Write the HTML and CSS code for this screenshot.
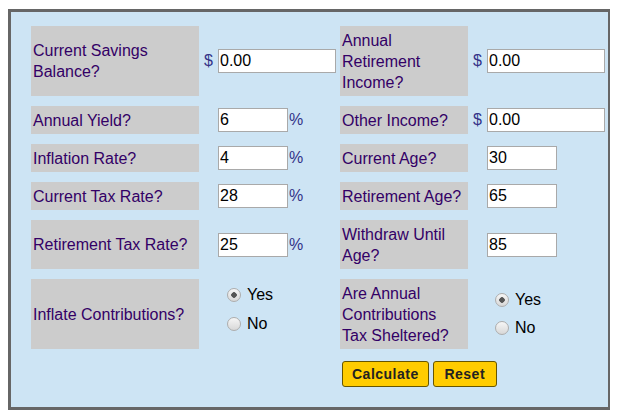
FILE: index.html
```html
<!DOCTYPE html>
<html lang="en">
<head>
  <meta charset="UTF-8" />
  <meta name="viewport" content="width=device-width, initial-scale=1.0" />
  <title>Retirement Calculator</title>
  <link rel="stylesheet" href="styles.css">
</head>
<body>
  <form class="calc" onsubmit="return false">
    <div class="grid">
      <div class="label">Current Savings Balance?</div>
      <div class="field"><span class="sym">$</span><input class="wide" type="text" value="0.00"></div>
      <div class="label">Annual Retirement Income?</div>
      <div class="field"><span class="sym">$</span><input class="wide" type="text" value="0.00"></div>

      <div class="label">Annual Yield?</div>
      <div class="field"><span class="sym"></span><input class="short" type="text" value="6"><span class="pct">%</span></div>
      <div class="label">Other Income?</div>
      <div class="field"><span class="sym">$</span><input class="wide" type="text" value="0.00"></div>

      <div class="label">Inflation Rate?</div>
      <div class="field"><span class="sym"></span><input class="short" type="text" value="4"><span class="pct">%</span></div>
      <div class="label">Current Age?</div>
      <div class="field"><span class="sym"></span><input class="short" type="text" value="30"></div>

      <div class="label">Current Tax Rate?</div>
      <div class="field"><span class="sym"></span><input class="short" type="text" value="28"><span class="pct">%</span></div>
      <div class="label">Retirement Age?</div>
      <div class="field"><span class="sym"></span><input class="short" type="text" value="65"></div>

      <div class="label">Retirement Tax Rate?</div>
      <div class="field"><span class="sym"></span><input class="short" type="text" value="25"><span class="pct">%</span></div>
      <div class="label">Withdraw Until Age?</div>
      <div class="field"><span class="sym"></span><input class="short" type="text" value="85"></div>

      <div class="label">Inflate Contributions?</div>
      <div class="choices left">
        <label><input type="radio" name="inflate" checked> Yes</label>
        <label><input type="radio" name="inflate"> No</label>
      </div>
      <div class="label">Are Annual Contributions Tax Sheltered?</div>
      <div class="choices">
        <label><input type="radio" name="shelter" checked> Yes</label>
        <label><input type="radio" name="shelter"> No</label>
      </div>

      <div></div>
      <div></div>
      <div class="buttons">
        <button type="button" class="calc-btn">Calculate</button>
        <button type="reset" class="reset-btn">Reset</button>
      </div>
    </div>
  </form>
</body>
</html>
```

FILE: styles.css
```css
body {
  margin: 8px;
  background: #fff;
  font-family: "Liberation Sans", Arial, sans-serif;
}

.calc {
  width: 575px;
  margin-top: 1px;
  padding: 14px 2px 20px 20px;
  background: #cde4f4;
  border: 3px solid #666;
}

.grid {
  display: grid;
  grid-template-columns: 168px 133px 128px 133px;
  column-gap: 4px;
  row-gap: 10px;
}

.label {
  display: flex;
  align-items: center;
  padding: 3.5px 5px 3.5px 2px;
  background: #ccc;
  color: #330066;
  font-size: 16px;
  line-height: 21px;
}

.field {
  display: flex;
  align-items: center;
  color: #333388;
  font-size: 16px;
}

.sym {
  width: 15px;
  padding-left: 1px;
  box-sizing: border-box;
}

.field input {
  height: 24px;
  box-sizing: border-box;
  margin: 0;
  padding: 1px 1px;
  border: 1px solid #a9a9a9;
  background: #fff;
  font-family: "Liberation Sans", Arial, sans-serif;
  font-size: 16px;
  color: #000;
}

.wide { width: 118px; }
.short { width: 70px; }

.pct { margin-left: 1px; }

.choices {
  display: flex;
  flex-direction: column;
  justify-content: center;
  gap: 7px;
  padding-left: 23px;
  font-size: 16px;
  color: #000;
}

.choices.left {
  padding-bottom: 9px;
  gap: 8px;
  padding-left: 24px;
}

.choices label {
  display: flex;
  align-items: center;
  gap: 6px;
  height: 21px;
}

.choices input {
  appearance: none;
  -webkit-appearance: none;
  width: 14px;
  height: 14px;
  margin: 0;
  border: 1px solid #adadad;
  border-radius: 50%;
  background: linear-gradient(#f6f6f6, #d8d8d8);
}

.choices input:checked {
  background: radial-gradient(circle, #555 0, #555 2.5px, transparent 3px), linear-gradient(#f6f6f6, #d8d8d8);
}

.buttons {
  grid-column: 3 / 5;
  display: flex;
  gap: 4px;
  padding: 2px 0 0 2px;
}

.buttons button {
  height: 26px;
  padding: 0 9px;
  background: #ffcc00;
  border: 1px solid #665500;
  border-radius: 3px;
  font-family: "Liberation Sans", Arial, sans-serif;
  font-size: 14px;
  font-weight: bold;
  letter-spacing: 0.5px;
  color: #222;
}

.buttons .reset-btn {
  width: 64px;
  padding: 0;
}
```
